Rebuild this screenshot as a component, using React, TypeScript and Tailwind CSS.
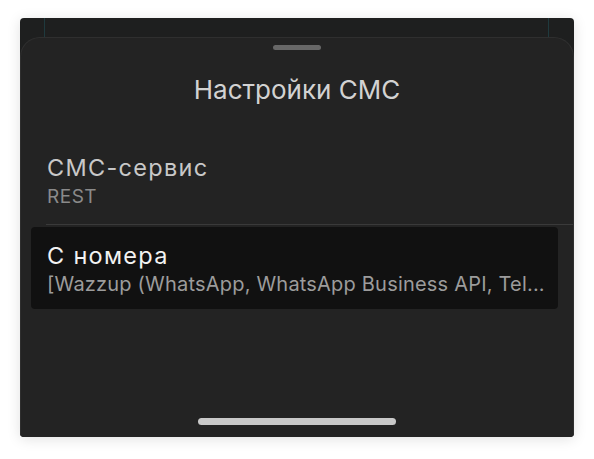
export default function App() {
  const font = { fontFamily: 'Inter, "Noto Sans", sans-serif' };
  return (
    <div className="w-[594px] h-[459px] bg-white pt-[18px] pl-[20px]" style={font}>
      <div className="w-[554px] h-[419px] rounded-[4px] overflow-hidden flex flex-col bg-[#1e1f1f] shadow-[0_2px_14px_rgba(0,0,0,0.12)]">
        <div className="h-[19px] shrink-0 flex justify-between pl-[24px] pr-[25px]">
          <div className="w-[1px] h-full bg-[#1f3a3e]" />
          <div className="w-[1px] h-full bg-[#1f3a3e]" />
        </div>
        <div className="flex-1 flex flex-col bg-[#232323] rounded-t-[20px] border border-b-0 border-[#2f2f2f]">
          <div className="mt-[7px] mx-auto w-[48px] h-[5px] rounded-full bg-[#676767]" />
          <div className="mt-[24px] text-center text-[26px] leading-[32px] text-[#d2d2d2]">Настройки СМС</div>
          <div className="mt-[48px] pl-[26px]">
            <div className="text-[23.5px] leading-[28px] tracking-[1.3px] text-[#c8c8c8]">СМС-сервис</div>
            <div className="mt-[3px] text-[19px] leading-[24px] tracking-[0.5px] text-[#8a8a8a]">REST</div>
          </div>
          <div className="mt-[15px] ml-[25px] h-[1px] bg-[#3a3a3a]" />
          <div className="mt-[2px] ml-[10px] mr-[15px] h-[82px] rounded-[4px] bg-[#111111] pl-[16px] pr-[8px] pt-[15px]">
            <div className="text-[23.5px] leading-[28px] tracking-[1.3px] text-[#f2f2f2]">С номера</div>
            <div className="mt-[2px] text-[20px] leading-[24px] tracking-[0.2px] text-[#9c9c9c] whitespace-nowrap">[Wazzup (WhatsApp, WhatsApp Business API, Tel...</div>
          </div>
          <div className="flex-1" />
          <div className="mb-[12px] mx-auto w-[198px] h-[7px] rounded-full bg-[#c9c9c9]" />
        </div>
      </div>
    </div>
  );
}
